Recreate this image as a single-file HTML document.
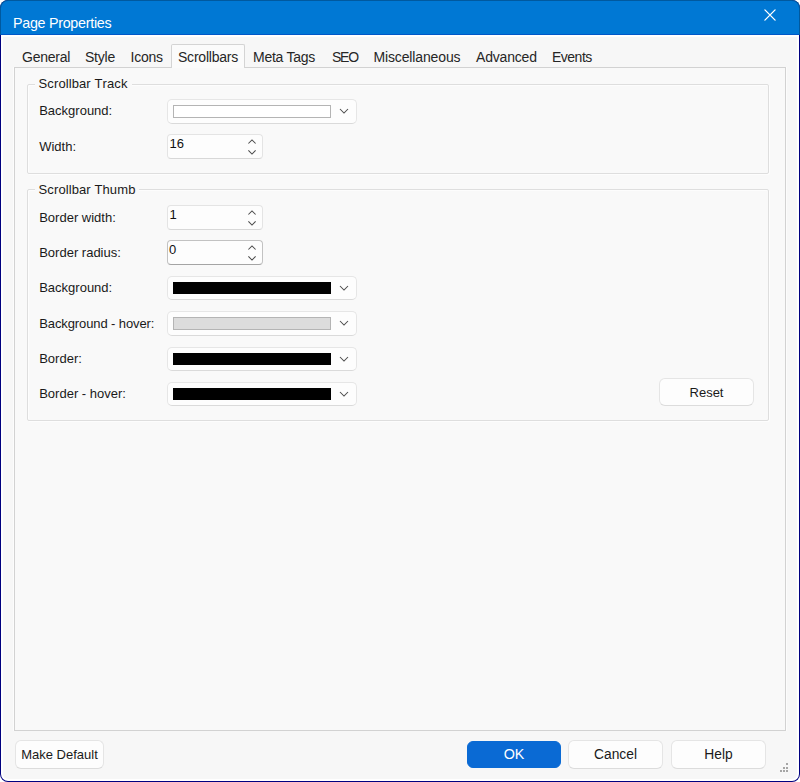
<!DOCTYPE html>
<html>
<head>
<meta charset="utf-8">
<title>Page Properties</title>
<style>
html,body{margin:0;padding:0;background:#fff;}
body{width:800px;height:782px;position:relative;overflow:hidden;font-family:"Liberation Sans",Arial,sans-serif;font-size:13px;color:#1a1a1a;}
.abs{position:absolute;}
#frame{position:absolute;left:0;top:0;width:800px;height:782px;background:#00007f;border-radius:8px;overflow:hidden;}
#tb-edge{position:absolute;left:0;top:0;width:800px;height:35px;background:#00599f;}
#tb{position:absolute;left:1px;top:1px;width:798px;height:34px;background:#0078d4;border-radius:7px 7px 0 0;}
#tb-line{position:absolute;left:1px;top:34px;width:798px;height:1px;background:#0058c8;}
#title{position:absolute;left:13px;top:14px;letter-spacing:-0.28px;font-size:14.3px;line-height:18px;color:#fff;white-space:nowrap;}
#client-w{position:absolute;left:1px;top:35px;width:798px;height:746px;background:#fff;border-radius:0 0 7px 7px;}
#client{position:absolute;left:3px;top:37px;width:794px;height:742px;background:#f7f7f7;border-radius:0 0 5px 5px;}
.tab{position:absolute;top:48px;font-size:14px;line-height:18px;white-space:nowrap;color:#262626;}
#pane{position:absolute;left:14px;top:67px;width:772px;height:664px;box-sizing:border-box;border:1px solid #d2d2d2;background:#f9f9f9;box-shadow:-1px 0 0 rgba(255,255,255,.6), 1px 0 0 rgba(255,255,255,.6);}
#seltab{position:absolute;left:171px;top:44px;width:74px;height:24px;box-sizing:border-box;border:1px solid #d4d4d4;border-bottom:none;background:#fbfbfb;border-radius:2px 2px 0 0;}
.grp{position:absolute;box-sizing:border-box;border:1px solid #dedede;border-radius:2px;box-shadow:1px 1px 0 rgba(255,255,255,.7), inset 1px 1px 0 rgba(255,255,255,.7);}
.lab{position:absolute;left:39.2px;font-kerning:none;font-size:13px;line-height:16px;white-space:nowrap;color:#1a1a1a;}
.leg{background:#f9f9f9;padding:0 4px;left:34.6px;letter-spacing:0.1px;}
.combo{position:absolute;left:167px;width:190px;height:24px;box-sizing:border-box;border:1px solid #e6e6e6;border-bottom-color:#dadada;border-radius:5px;background:#fdfdfd;}
.sw{position:absolute;left:5px;top:5px;width:158px;height:12px;box-sizing:border-box;border:1px solid #b4b4b4;}
.combo svg{position:absolute;left:171px;top:8px;}
.spin{position:absolute;left:167px;width:96px;height:25px;box-sizing:border-box;border:1px solid #e4e4e4;border-bottom-color:#d8d8d8;border-radius:4px;background:#fdfdfd;}
.spin.f{border-color:#c2c2c2;border-bottom-color:#a4a4a4;}
.spin span{position:absolute;left:1.5px;top:1px;font-size:13px;line-height:16px;color:#111;}
.spin svg{position:absolute;left:79px;top:4px;}
.btn{position:absolute;box-sizing:border-box;border:1px solid #e5e5e5;border-bottom-color:#dcdcdc;border-radius:6px;background:#fdfdfd;text-align:center;white-space:nowrap;color:#1a1a1a;}
.dot{position:absolute;width:2px;height:2px;background:#a6a6a6;}
</style>
</head>
<body>
<div id="frame">
  <div id="tb-edge"></div>
  <div id="tb"></div>
  <div id="tb-line"></div>
  <div id="title">Page Properties</div>
  <svg class="abs" style="left:763px;top:8px" width="14" height="14" viewBox="0 0 14 14"><path d="M1.9 1.9 L12.1 12.1 M12.1 1.9 L1.9 12.1" stroke="#fff" stroke-width="1.3" fill="none" stroke-linecap="round"/></svg>
  <div id="client-w"></div>
  <div id="client"></div>

  <div id="pane"></div>
  <div id="seltab"></div>

  <div class="tab" style="left:22px;letter-spacing:-0.25px">General</div>
  <div class="tab" style="left:85px;letter-spacing:-0.22px">Style</div>
  <div class="tab" style="left:130.5px;letter-spacing:-0.24px">Icons</div>
  <div class="tab" style="left:178px;letter-spacing:-0.22px">Scrollbars</div>
  <div class="tab" style="left:253px;letter-spacing:-0.25px">Meta Tags</div>
  <div class="tab" style="left:332px;letter-spacing:-1.25px">SEO</div>
  <div class="tab" style="left:373.5px;letter-spacing:-0.14px">Miscellaneous</div>
  <div class="tab" style="left:476px;letter-spacing:-0.18px">Advanced</div>
  <div class="tab" style="left:552px;letter-spacing:-0.5px">Events</div>

  <!-- group 1 -->
  <div class="grp" style="left:27px;top:84px;width:742px;height:90px"></div>
  <div class="lab leg" style="top:76px">Scrollbar Track</div>
  <div class="lab" style="top:103px">Background:</div>
  <div class="combo" style="top:99px;height:25px"><div class="sw" style="background:#fff;height:13px"></div><svg width="10" height="6" viewBox="0 0 10 6"><path d="M1 1 L5 5 L9 1" stroke="#4a4a4a" stroke-width="1.05" fill="none"/></svg></div>
  <div class="lab" style="top:139px">Width:</div>
  <div class="spin" style="top:134px"><span>16</span><svg width="10" height="16" viewBox="0 0 10 16"><path d="M1.4 4.5 L5 0.9 L8.6 4.5 M1.4 11.4 L5 15 L8.6 11.4" stroke="#4a4a4a" stroke-width="1.05" fill="none"/></svg></div>

  <!-- group 2 -->
  <div class="grp" style="left:27px;top:189px;width:742px;height:232px"></div>
  <div class="lab leg" style="top:182px">Scrollbar Thumb</div>
  <div class="lab" style="top:210px">Border width:</div>
  <div class="spin" style="top:205px"><span>1</span><svg width="10" height="16" viewBox="0 0 10 16"><path d="M1.4 4.5 L5 0.9 L8.6 4.5 M1.4 11.4 L5 15 L8.6 11.4" stroke="#4a4a4a" stroke-width="1.05" fill="none"/></svg></div>
  <div class="lab" style="top:245px">Border radius:</div>
  <div class="spin f" style="top:240px"><span style="left:1px">0</span><svg width="10" height="16" viewBox="0 0 10 16"><path d="M1.4 4.5 L5 0.9 L8.6 4.5 M1.4 11.4 L5 15 L8.6 11.4" stroke="#4a4a4a" stroke-width="1.05" fill="none"/></svg></div>
  <div class="lab" style="top:280px">Background:</div>
  <div class="combo" style="top:276px"><div class="sw" style="background:#000;border-color:#000"></div><svg width="10" height="6" viewBox="0 0 10 6"><path d="M1 1 L5 5 L9 1" stroke="#4a4a4a" stroke-width="1.05" fill="none"/></svg></div>
  <div class="lab" style="top:316px;letter-spacing:-0.1px">Background - hover:</div>
  <div class="combo" style="top:311px;height:25px"><div class="sw" style="background:#dcdcdc;height:13px"></div><svg width="10" height="6" viewBox="0 0 10 6"><path d="M1 1 L5 5 L9 1" stroke="#4a4a4a" stroke-width="1.05" fill="none"/></svg></div>
  <div class="lab" style="top:351px">Border:</div>
  <div class="combo" style="top:347px"><div class="sw" style="background:#000;border-color:#000"></div><svg width="10" height="6" viewBox="0 0 10 6"><path d="M1 1 L5 5 L9 1" stroke="#4a4a4a" stroke-width="1.05" fill="none"/></svg></div>
  <div class="lab" style="top:386px">Border - hover:</div>
  <div class="combo" style="top:382px"><div class="sw" style="background:#000;border-color:#000"></div><svg width="10" height="6" viewBox="0 0 10 6"><path d="M1 1 L5 5 L9 1" stroke="#4a4a4a" stroke-width="1.05" fill="none"/></svg></div>

  <div class="btn" style="left:659px;top:378px;width:95px;height:28px;font-size:13px;line-height:28px">Reset</div>

  <!-- bottom buttons -->
  <div class="btn" style="left:15px;top:740px;width:89px;height:29px;font-size:13px;line-height:28px">Make Default</div>
  <div class="btn" style="left:467px;top:741px;width:94px;height:27px;font-size:14.3px;line-height:24px;background:#0a6ad4;border-color:#0a6ad4;color:#fff">OK</div>
  <div class="btn" style="left:568px;top:740px;width:95px;height:29px;font-size:13.8px;line-height:27px">Cancel</div>
  <div class="btn" style="left:671px;top:740px;width:95px;height:29px;font-size:13.8px;line-height:27px">Help</div>

  <!-- grip -->
  <div class="dot" style="left:786px;top:763px"></div>
  <div class="dot" style="left:783px;top:767px"></div><div class="dot" style="left:786px;top:767px"></div>
  <div class="dot" style="left:780px;top:770px"></div><div class="dot" style="left:783px;top:770px"></div><div class="dot" style="left:786px;top:770px"></div>
</div>
</body>
</html>
